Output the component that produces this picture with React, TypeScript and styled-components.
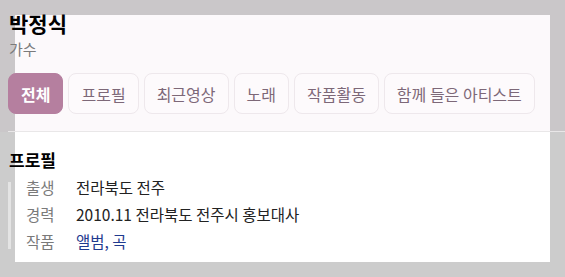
import React from 'react';
import styled, { createGlobalStyle } from 'styled-components';

const GlobalStyle = createGlobalStyle`
  html, body {
    margin: 0;
    padding: 0;
    background: #cccccc;
  }
  body {
    font-family: "Noto Sans CJK KR", "Noto Sans", sans-serif;
  }
`;

const tabs = ['전체', '프로필', '최근영상', '노래', '작품활동', '함께 들은 아티스트'];

const profile = [
  { label: '출생', value: '전라북도 전주' },
  { label: '경력', value: '2010.11 전라북도 전주시 홍보대사' },
  { label: '작품', value: '앨범, 곡', link: true },
];

export default function App() {
  return (
    <>
      <GlobalStyle />
      <Page>
        <Card />
        <Header>
          <HeaderInner>
            <Name>박정식</Name>
            <Job>가수</Job>
            <Tabs>
              {tabs.map((t, i) => (
                <Tab key={t} $active={i === 0}>
                  {t}
                </Tab>
              ))}
            </Tabs>
          </HeaderInner>
        </Header>
        <Section>
          <SectionTitle>프로필</SectionTitle>
          <InfoList>
            {profile.map((row) => (
              <InfoRow key={row.label}>
                <Label>{row.label}</Label>
                {row.link ? <LinkValue>{row.value}</LinkValue> : <Value>{row.value}</Value>}
              </InfoRow>
            ))}
          </InfoList>
        </Section>
      </Page>
    </>
  );
}

const Page = styled.div`
  position: relative;
  height: 277px;
  overflow: hidden;
  background: #cccccc;
`;

const Card = styled.div`
  position: absolute;
  top: 15px;
  left: 15px;
  width: 535px;
  height: 247px;
  background: #ffffff;
`;

const Header = styled.header`
  position: relative;
  background: rgba(150, 50, 120, 0.03);
`;

const HeaderInner = styled.div`
  margin-left: 8px;
  padding-top: 9px;
  padding-bottom: 17px;
  border-bottom: 1px solid #e9e7e8;
`;

const Name = styled.h1`
  margin: 0 0 0 1px;
  font-size: 21px;
  line-height: 28px;
  font-weight: 700;
  color: #000;
`;

const Job = styled.div`
  margin-left: 1px;
  font-size: 15px;
  line-height: 24px;
  color: #7a7a7a;
`;

const Tabs = styled.div`
  display: flex;
  gap: 5px;
  margin-top: 12px;
`;

const Tab = styled.button<{ $active?: boolean }>`
  height: 41px;
  padding: 0 12px;
  border-radius: 8px;
  border: 1px solid ${(p) => (p.$active ? '#b57f9f' : '#eee8ec')};
  background: ${(p) => (p.$active ? '#b57f9f' : '#fdfafc')};
  color: ${(p) => (p.$active ? '#ffffff' : '#7d6878')};
  font-family: inherit;
  font-size: 16px;
  font-weight: ${(p) => (p.$active ? 700 : 400)};
  white-space: nowrap;
  cursor: pointer;
`;

const Section = styled.section`
  position: relative;
  padding-left: 9px;
  padding-top: 16px;
`;

const SectionTitle = styled.h2`
  margin: 0;
  font-size: 17px;
  line-height: 24px;
  font-weight: 700;
  color: #000;
`;

const InfoList = styled.div`
  position: relative;
  margin-left: -1px;
  padding-left: 18px;
  padding-top: 2px;

  &::before {
    content: '';
    position: absolute;
    left: 0;
    top: 10px;
    bottom: 6px;
    width: 3px;
    background: #e4e4e4;
  }
`;

const InfoRow = styled.div`
  display: flex;
  font-size: 15.5px;
  line-height: 27px;
`;

const Label = styled.span`
  width: 50px;
  color: #7a7a7a;
`;

const Value = styled.span`
  color: #222;
`;

const LinkValue = styled.a`
  color: #1f3a8f;
  text-decoration: none;
`;
